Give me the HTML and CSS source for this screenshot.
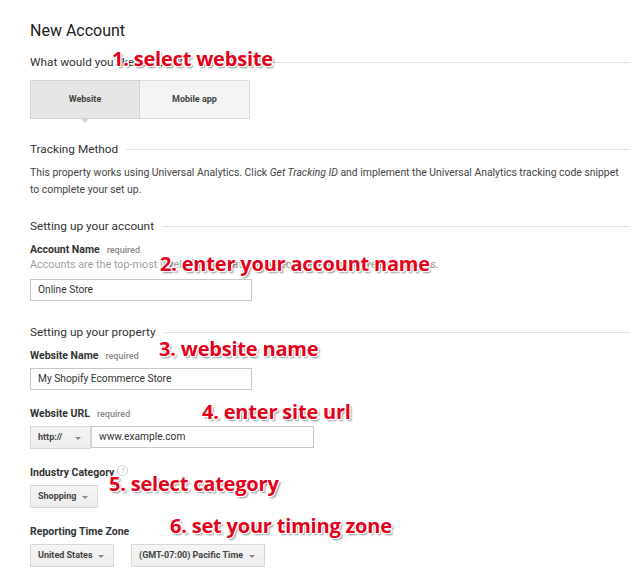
FILE: index.html
```html
<!DOCTYPE html>
<html>
<head>
<meta charset="utf-8">
<link rel="stylesheet" href="styles.css">
</head>
<body>
<div class="page">
  <h1 class="title">New Account</h1>

  <div class="sec-head sec-first"><span>What would you like to track?</span><i class="rule"></i></div>
  <div class="toggle">
    <div class="tbtn active">Website</div>
    <div class="tbtn">Mobile app</div>
  </div>

  <div class="sec-head sec-track"><span>Tracking Method</span><i class="rule"></i></div>
  <p class="para">This property works using Universal Analytics. Click <em>Get Tracking ID</em> and implement the Universal Analytics tracking code snippet to complete your set up.</p>

  <div class="sec-head sec-acc"><span>Setting up your account</span><i class="rule"></i></div>
  <div class="label">Account Name <span class="req">required</span></div>
  <div class="hint">Accounts are the top-most level of organization and contain one or more tracking IDs.</div>
  <div class="input w-acc">Online Store</div>

  <div class="sec-head sec-prop"><span>Setting up your property</span><i class="rule"></i></div>
  <div class="field">
    <div class="label">Website Name <span class="req">required</span></div>
    <div class="input w-acc">My Shopify Ecommerce Store</div>
  </div>
  <div class="field">
    <div class="label">Website URL <span class="req">required</span></div>
    <div class="row">
      <div class="select w-http">http://<b class="caret"></b></div>
      <div class="input w-url joined">www.example.com</div>
    </div>
  </div>
  <div class="field">
    <div class="label">Industry Category <span class="help">?</span></div>
    <div class="select w-shop">Shopping<b class="caret"></b></div>
  </div>
  <div class="field">
    <div class="label">Reporting Time Zone</div>
    <div class="row gap">
      <div class="select w-us">United States<b class="caret"></b></div>
      <div class="select w-gmt">(GMT-07:00) Pacific Time<b class="caret"></b></div>
    </div>
  </div>

  <div class="note n1">1. select website</div>
  <div class="note n2">2. enter your account name</div>
  <div class="note n3">3. website name</div>
  <div class="note n4">4. enter site url</div>
  <div class="note n5">5. select category</div>
  <div class="note n6">6. set your timing zone</div>
</div>
</body>
</html>
```

FILE: styles.css
```css
html, body {
  margin: 0;
  background: #fff;
}
body {
  font-family: Roboto, "Liberation Sans", sans-serif;
  color: #333;
}
.page {
  position: relative;
  padding: 21px 5px 0 30px;
  width: 600px;
  height: 565px;
  overflow: hidden;
}
.title {
  margin: 0;
  font-size: 16px;
  line-height: 20px;
  font-weight: 400;
  color: #222;
}
.sec-head {
  display: flex;
  align-items: center;
  font-size: 11.8px;
  line-height: 16px;
  color: #333;
}
.sec-head span {
  white-space: nowrap;
}
.rule {
  flex: 1;
  height: 1px;
  background: #e2e2e2;
  margin-left: 8px;
  margin-top: 1px;
}
.sec-first { margin-top: 13px; }
.sec-track { margin-top: 22px; }
.sec-acc { margin-top: 20px; }
.sec-prop { margin-top: 23px; }

.toggle {
  display: flex;
  margin-top: 10px;
  width: 219px;
}
.tbtn {
  position: relative;
  flex: 0 0 110px;
  height: 37px;
  line-height: 37px;
  text-align: center;
  font-size: 9px;
  font-weight: 700;
  color: #444;
  background: #f4f4f4;
  border: 1px solid #dcdcdc;
  box-sizing: content-box;
}
.tbtn + .tbtn { border-left: none; flex-basis: 109px; }
.tbtn.active {
  background: #e6e6e6;
  border-color: #d4d4d4;
  flex-basis: 108px;
}
.tbtn.active::after {
  content: "";
  position: absolute;
  left: 50%;
  bottom: -5px;
  margin-left: -5px;
  border-left: 5px solid transparent;
  border-right: 5px solid transparent;
  border-top: 5px solid #d4d4d4;
}

.para {
  margin: 7px 0 0;
  font-size: 10.4px;
  line-height: 17px;
  color: #444;
}
.para em { font-style: italic; }

.label {
  margin-top: 9px;
  font-size: 10.5px;
  line-height: 14px;
  font-weight: 700;
  color: #333;
  display: flex;
  align-items: center;
}
.req {
  font-size: 9px;
  font-weight: 500;
  color: #888;
  margin-left: 7px;
}
.help {
  width: 9px;
  height: 9px;
  border: 1px solid #ccc;
  border-radius: 50%;
  font-size: 8px;
  line-height: 9px;
  text-align: center;
  color: #bbb;
  font-weight: 400;
  margin-left: 3px;
  margin-top: -6px;
}
.hint {
  margin-top: 1px;
  font-size: 10.8px;
  line-height: 14px;
  color: #a0a0a0;
  white-space: nowrap;
}
.hint + .input { margin-top: 7px; }

.field .label { margin-bottom: 5px; }
.field + .field .label { margin-top: 17px; }

.input {
  height: 20px;
  line-height: 20px;
  border: 1px solid #c8c8c8;
  padding-left: 7px;
  font-size: 10.2px;
  color: #333;
  background: #fff;
}
.w-acc { width: 213px; }
.w-url { width: 214px; }
.joined { border-left-color: #d0d0d0; }

.row { display: flex; }
.row.gap { gap: 17px; }

.select {
  position: relative;
  height: 21px;
  line-height: 20px;
  border: 1px solid #d8d8d8;
  background: linear-gradient(#f5f5f5, #ededed);
  padding-left: 7px;
  font-size: 9px;
  font-weight: 700;
  color: #444;
  box-sizing: content-box;
}
.caret {
  position: absolute;
  right: 9px;
  top: 10px;
  border-left: 3px solid transparent;
  border-right: 3px solid transparent;
  border-top: 3px solid #888;
}
.w-http { width: 52px; }
.w-shop { width: 59px; }
.w-us { width: 75px; }
.w-gmt { width: 125px; }

.note {
  position: absolute;
  font-family: "Open Sans", "DejaVu Sans", sans-serif;
  font-weight: 700;
  font-size: 20px;
  line-height: 24px;
  color: #e3001b;
  white-space: nowrap;
  letter-spacing: -0.2px;
  text-shadow:
    -1px -1px 0 #fff, 0 -1px 0 #fff, 1px -1px 0 #fff,
    -1px 0 0 #fff, 1px 0 0 #fff,
    -1px 1px 0 #fff, 0 1px 0 #fff, 1px 1px 0 #fff,
    2px 2px 2px rgba(0, 0, 0, 0.45);
}
.n1 { left: 112px; top: 47px; }
.n2 { left: 160px; top: 252px; }
.n3 { left: 159px; top: 337px; }
.n4 { left: 202px; top: 400px; }
.n5 { left: 109px; top: 472px; }
.n6 { left: 170px; top: 514px; }
```
